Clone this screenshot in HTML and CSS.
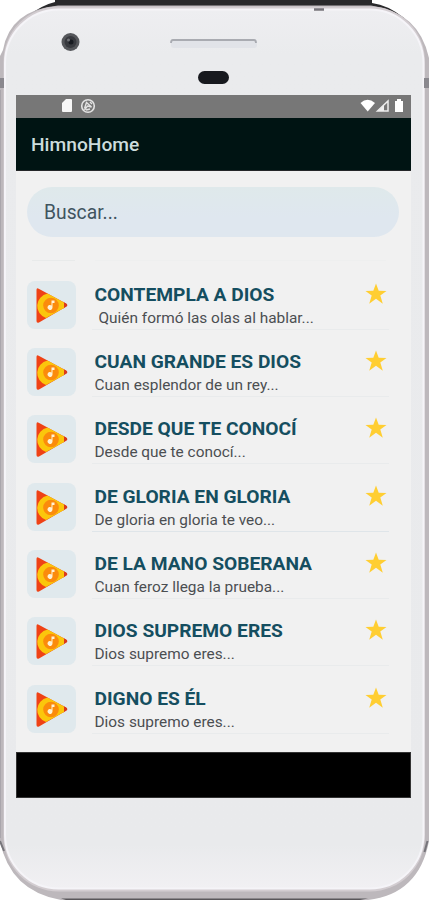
FILE: index.html
```
<!DOCTYPE html>
<html lang="es">
<head>
<meta charset="utf-8">
<title>HimnoHome</title>
<link rel="stylesheet" href="styles.css">
</head>
<body>
<svg class="symbols" aria-hidden="true">
  <symbol id="play" viewBox="0 0 48 48">
    <path d="M9.500 9q0-2.500 2.200-1.200L39 22.500q2.500 1.700 0 3.200L12 41.500q-2.500 1-2.500-1.500z" fill="#ef4216"/>
    <path d="M36 20.800l3 1.700q2.500 1.700 0 3.200l-3 1.800z" fill="#d93a1c"/>
    <path d="M20.500 12.600L37 21.500v5.400L19 37A12.600 12.600 0 0 1 20.500 12.600z" fill="#fbc60c"/>
    <circle cx="24" cy="24.500" r="7.800" fill="#fb8b0c"/>
    <path d="M24.500 19.500h3V22h-2v4.500a2.500 2.500 0 1 1-1-2z" fill="#fff3d6"/>
  </symbol>
  <symbol id="star" viewBox="0 0 22 22">
    <path d="M11 .5l2.700 7.200 7.800.2-6.200 4.600 2.500 8.200-6.800-4.900-6.800 4.900 2.500-8.200L.5 7.900l7.800-.2z" fill="#ffce32"/>
  </symbol>
</svg>
<div class="phone">
  <svg class="frame" viewBox="0 0 429 900" aria-hidden="true">
    <defs>
      <linearGradient id="shell" x1="0" x2="0" y1="0" y2="1">
        <stop offset="0" stop-color="#eeeef1"/>
        <stop offset=".05" stop-color="#eaebed"/>
        <stop offset=".95" stop-color="#e9eaec"/>
        <stop offset="1" stop-color="#f1f0f3"/>
      </linearGradient>
    </defs>
    <path d="M28 16Q42 5 55 2V0H372V3Q388 5 404 18L390 26H40z" fill="#29292b"/>
    <path d="M0 56L3 50Q10 10 58 5.500H371Q419 12 429 58V841Q419 894 368 900H61Q10 891 0 841z" fill="#bdb8bc"/>
    <path d="M61 898.500H368L360 900H66z" fill="#59565a"/>
    <rect x="3.500" y="6.500" width="421.500" height="885" rx="55" fill="#d3cdd1"/>
    <rect x="5" y="9.500" width="418.500" height="879" rx="54" fill="url(#shell)" stroke="#f5f4f8" stroke-width="2"/>
    <path d="M0 83h4M424 83h5" stroke="#8a888e" stroke-width="10"/>
    <path d="M314 9.500h10" stroke="#77757b" stroke-width="2.500"/>
    <path d="M0 841l4 10M427.500 841l-3 11" stroke="#77757b" stroke-width="2"/>
    <path d="M0 90v748" stroke="#aaa6ac" stroke-width="2"/>
    <circle cx="70.500" cy="42" r="9" fill="#55575b"/>
    <circle cx="70.500" cy="42" r="6" fill="#37393e"/>
    <circle cx="71" cy="42" r="2.500" fill="#171a20"/>
    <circle cx="68.500" cy="40" r="1.500" fill="#707276"/>
    <rect x="171" y="39" width="86" height="9" rx="3" fill="#e1e3e8"/>
    <path d="M171 43q0-3 2-3h81q2 0 2 3" fill="none" stroke="#a9abb1" stroke-width="1.800"/>
    <rect x="198" y="71" width="31" height="13" rx="6.500" fill="#17191e"/>
  </svg>
  <main class="screen">
    <div class="status">
      <svg class="status-left" viewBox="0 0 36 16" aria-hidden="true">
        <path d="M1 5l4-4h5q1 0 1 1v11q0 1-1 1H2q-1 0-1-1z" fill="#f7f7f7"/>
        <circle cx="27" cy="8" r="6.300" fill="none" stroke="#e3e3e3" stroke-width="1.600"/>
        <path d="M23.500 10.500l2-6 5 4.500-4-1-3 4M29 4l2 2M25 12l4-1" fill="none" stroke="#e3e3e3" stroke-width="1.400"/>
      </svg>
      <svg class="status-right" viewBox="0 0 44 16" aria-hidden="true">
        <path d="M.5 5Q7.500-1.500 15 5L7.700 13.500z" fill="#fff"/>
        <path d="M17.500 13L28 3v10z" fill="none" stroke="#eee" stroke-width="1.500"/>
        <path d="M18 13l6-6v6z" fill="#eee"/>
        <path d="M35 3h2V1h4v2h2v11h-8z" fill="#fff"/>
      </svg>
    </div>
    <header class="appbar"><h1>HimnoHome</h1></header>
    <section class="content">
      <div class="search">Buscar...</div>
      <div class="rule"><i></i><i></i></div>
      <ul class="songs">
        <li><span class="cover"><svg><use href="#play"/></svg></span><div class="song"><h2>CONTEMPLA A DIOS</h2><p class="inset">Quién formó las olas al hablar...</p></div><svg class="star"><use href="#star"/></svg></li>
        <li><span class="cover"><svg><use href="#play"/></svg></span><div class="song"><h2>CUAN GRANDE ES DIOS</h2><p>Cuan esplendor de un rey...</p></div><svg class="star"><use href="#star"/></svg></li>
        <li><span class="cover"><svg><use href="#play"/></svg></span><div class="song"><h2>DESDE QUE TE CONOCÍ</h2><p>Desde que te conocí...</p></div><svg class="star"><use href="#star"/></svg></li>
        <li><span class="cover"><svg><use href="#play"/></svg></span><div class="song strong"><h2>DE GLORIA EN GLORIA</h2><p>De gloria en gloria te veo...</p></div><svg class="star"><use href="#star"/></svg></li>
        <li><span class="cover"><svg><use href="#play"/></svg></span><div class="song"><h2>DE LA MANO SOBERANA</h2><p>Cuan feroz llega la prueba...</p></div><svg class="star"><use href="#star"/></svg></li>
        <li><span class="cover"><svg><use href="#play"/></svg></span><div class="song"><h2>DIOS SUPREMO ERES</h2><p>Dios supremo eres...</p></div><svg class="star"><use href="#star"/></svg></li>
        <li><span class="cover"><svg><use href="#play"/></svg></span><div class="song"><h2>DIGNO ES ÉL</h2><p>Dios supremo eres...</p></div><svg class="star"><use href="#star"/></svg></li>
      </ul>
    </section>
    <footer class="navbar"></footer>
  </main>
</div>
</body>
</html>
```

FILE: styles.css
```
* { box-sizing: border-box; margin: 0; padding: 0; }
body { background: #fff; font-family: Roboto, "Liberation Sans", sans-serif; overflow: hidden; }
.symbols { display: none; }
.phone { position: relative; width: 429px; height: 900px; padding: 95px 18px 102px 16px; }
.frame { position: absolute; inset: 0; width: 429px; height: 900px; }
.screen { position: relative; display: flex; flex-direction: column; height: 703px; }
.status { display: flex; justify-content: space-between; height: 23px; padding: 3px 7px 0 45px; background: #777; }
.status-left { width: 36px; height: 16px; }
.status-right { width: 44px; height: 16px; }
.appbar { display: flex; align-items: center; height: 53px; padding: 3px 15px 0; background: #001413; border-bottom: 1px solid #252729; }
.appbar h1 { font-size: 19.200px; line-height: 24px; font-weight: 500; color: #ccdcdc; }
.content { flex: 1; padding: 16px 12px 0 11px; background: #f1f1f1; }
.search { height: 50px; padding-left: 17px; border-radius: 25px; background: linear-gradient(#dfe9eb, #dfe7ef 60%); font-size: 19.300px; line-height: 52px; color: #40545f; }
.rule { display: flex; gap: 20px; height: 44px; padding: 23px 13px 0 5px; }
.rule i { height: 1px; width: 43px; background: #e8eaea; }
.rule i + i { flex: 1; width: auto; background: #eeefef; }
.songs { list-style: none; }
.songs li { display: flex; align-items: flex-start; height: 67.35px; }
.cover { flex: none; width: 49px; height: 48px; border-radius: 8px; background: #e0e9ed; }
.cover svg { display: block; width: 48px; height: 48px; }
.song { width: 297px; height: 49px; margin-left: 16px; padding-left: 2.500px; border-bottom: 1px solid #e9ebec; }
.song.strong { border-color: #dfe5e9; }
.song h2 { padding-top: 2px; font-size: 19.200px; line-height: 24px; font-weight: 700; white-space: nowrap; color: #154e60; }
.song p { font-size: 15.400px; line-height: 22px; white-space: nowrap; color: #4b4e51; }
.song .inset { padding-left: 4px; }
.star { flex: none; width: 22px; height: 22px; margin: 2px 0 0 -24px; }
.navbar { height: 46px; background: #000; border: 1px solid #333; }
```
